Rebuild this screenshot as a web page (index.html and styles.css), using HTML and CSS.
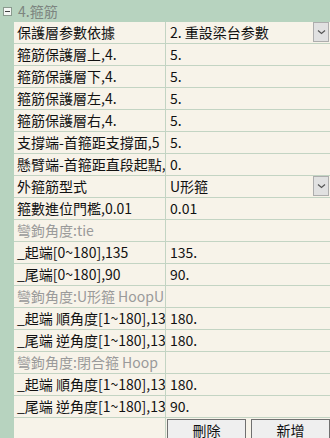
FILE: index.html
```html
<html>
    <head>
        <meta charset="utf-8">
        <title>箍筋</title>
        <link rel="stylesheet" href="styles.css">
    </head>
    <body>
        <div class="header">
            <span class="toggle"></span>
            <span class="title">4.箍筋</span>
        </div>

        <div class="grid">
            <div class="name">保護層参數依據</div>
            <div class="value combo"><span>2. 重設梁台参數</span><span class="drop"><svg width="9" height="6" viewBox="0 0 9 6"><path d="M1 1.5 L4.5 4.5 L8 1.5" fill="none" stroke="#555" stroke-width="1.2"/></svg></span></div>

            <div class="name">箍筋保護層上,4.</div>
            <div class="value">5.</div>

            <div class="name">箍筋保護層下,4.</div>
            <div class="value">5.</div>

            <div class="name">箍筋保護層左,4.</div>
            <div class="value">5.</div>

            <div class="name">箍筋保護層右,4.</div>
            <div class="value">5.</div>

            <div class="name">支撐端-首箍距支撐面,5</div>
            <div class="value">5.</div>

            <div class="name">懸臂端-首箍距直段起點,</div>
            <div class="value">0.</div>

            <div class="name">外箍筋型式</div>
            <div class="value combo"><span>U形箍</span><span class="drop"><svg width="9" height="6" viewBox="0 0 9 6"><path d="M1 1.5 L4.5 4.5 L8 1.5" fill="none" stroke="#555" stroke-width="1.2"/></svg></span></div>

            <div class="name">箍數進位門檻,0.01</div>
            <div class="value">0.01</div>

            <div class="name group">彎鉤角度:tie</div>
            <div class="value"></div>

            <div class="name">_起端[0~180],135</div>
            <div class="value">135.</div>

            <div class="name">_尾端[0~180],90</div>
            <div class="value">90.</div>

            <div class="name group">彎鉤角度:U形箍 HoopU</div>
            <div class="value"></div>

            <div class="name">_起端 順角度[1~180],13</div>
            <div class="value">180.</div>

            <div class="name">_尾端 逆角度[1~180],13</div>
            <div class="value">180.</div>

            <div class="name group">彎鉤角度:閉合箍 Hoop</div>
            <div class="value"></div>

            <div class="name">_起端 順角度[1~180],13</div>
            <div class="value">180.</div>

            <div class="name">_尾端 逆角度[1~180],13</div>
            <div class="value">90.</div>

            <div class="name foot"></div>
            <div class="buttons">
                <button>刪除</button>
                <button>新增</button>
            </div>
        </div>
    </body>
</html>
```

FILE: styles.css
```css
body {
    margin: 0;
    background: #b7d3bf;
    font-family: "Noto Sans CJK TC", "Noto Sans", sans-serif;
    font-size: 14px;
    color: #111;
    overflow: hidden;
}
.header {
    height: 22px;
    display: flex;
    align-items: center;
}
.header .toggle {
    width: 7px;
    height: 7px;
    margin-left: 3px;
    margin-right: 6px;
    border: 1px solid #8a9a8e;
    background: #f4f6f4;
    position: relative;
}
.header .toggle:after {
    content: "";
    position: absolute;
    left: 1px;
    top: 3px;
    width: 5px;
    height: 1px;
    background: #444;
}
.header .title {
    color: #7d8580;
    line-height: 22px;
}
.grid {
    margin-left: 14px;
    display: grid;
    grid-template-columns: 152px 1fr;
    background: #f7f3e9;
}
.name, .value {
    height: 21px;
    line-height: 21px;
    border-bottom: 1px solid #c3d4c3;
    white-space: nowrap;
    overflow: hidden;
}
.name {
    padding-left: 3px;
    border-right: 1px solid #c3d4c3;
}
.name.group {
    color: #9a9a9a;
}
.value {
    padding-left: 4px;
}
.value.combo {
    display: flex;
    justify-content: space-between;
    padding-right: 1px;
}
.drop {
    width: 14px;
    height: 18px;
    border: 1px solid #adadad;
    background: #e1e1e1;
    display: flex;
    align-items: center;
    justify-content: center;
}
.name.foot {
    border-bottom: none;
    height: 20px;
}
.buttons {
    display: flex;
    gap: 5px;
    padding-left: 1px;
    padding-top: 1px;
    height: 20px;
}
.buttons button {
    flex: 1;
    height: 21px;
    margin: 0;
    padding: 0;
    border: 1px solid #707070;
    background: #efefef;
    font-family: "Noto Sans CJK TC", "Noto Sans", sans-serif;
    font-size: 14px;
    line-height: 18px;
    color: #111;
}
```
